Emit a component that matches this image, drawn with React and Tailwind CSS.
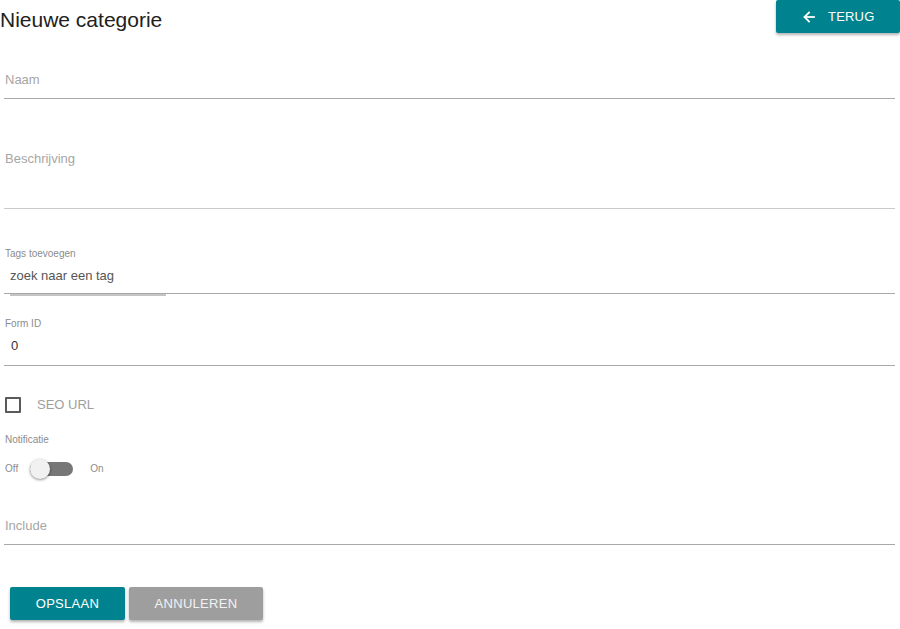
import React from "react";

function ArrowLeft() {
  return (
    <svg width="12" height="12" viewBox="0 0 12 12" fill="none" stroke="white" strokeWidth="1.8" strokeLinecap="square">
      <path d="M11 6H1.8" />
      <path d="M6 1.5L1.5 6L6 10.5" />
    </svg>
  );
}

export default function App() {
  return (
    <div className="w-[900px] h-[629px] bg-white overflow-hidden" style={{ fontFamily: '"Liberation Sans", Arial, sans-serif' }}>
      {/* header */}
      <div className="flex justify-between h-[33px]">
        <h1 className="pt-[8px] text-[21px] leading-[24px] text-[#212121] font-normal">Nieuwe categorie</h1>
        <button className="h-[33px] w-[124px] bg-[#00838f] text-white flex items-center pl-[27px] gap-[13px] text-[13px] leading-[15px] tracking-[0.2px] rounded-[2px] shadow-[0_2px_3px_rgba(0,0,0,0.3)]">
          <ArrowLeft />
          <span>TERUG</span>
        </button>
      </div>

      <div className="pl-[4px] pr-[5px]">
        {/* Naam */}
        <div className="h-[66px] border-b border-[#a8a8a8] pt-[39px] pl-[1px]">
          <div className="text-[13px] leading-[15px] text-[#a6a6a6]">Naam</div>
        </div>

        {/* Beschrijving */}
        <div className="h-[110px] border-b border-[#cacaca] pt-[52px] pl-[1px]">
          <div className="text-[13px] leading-[15px] text-[#a6a6a6]">Beschrijving</div>
        </div>

        {/* Tags */}
        <div className="h-[85px] border-b border-[#a8a8a8] pt-[39px] pl-[1px]">
          <div className="text-[10px] leading-[12px] text-[#8c8c8c]">Tags toevoegen</div>
          <div className="mt-[8px] pl-[5px] text-[13px] leading-[15px] text-[#555555]">zoek naar een tag</div>
        </div>
        <div className="ml-[6px] w-[156px] h-[2px] bg-[#c4c4c4]"></div>

        {/* Form ID */}
        <div className="h-[70px] border-b border-[#a8a8a8] pt-[22px] pl-[1px]">
          <div className="text-[10px] leading-[12px] text-[#8c8c8c]">Form ID</div>
          <div className="mt-[8px] pl-[6px] text-[13px] leading-[15px] text-[#333333]">0</div>
        </div>

        {/* SEO URL */}
        <div className="mt-[30px] h-[17px] flex items-center pl-[1px]">
          <div className="w-[16px] h-[16px] border-2 border-[#5a5a5a] rounded-[1px]"></div>
          <span className="ml-[16px] text-[13px] leading-[15px] text-[#9e9e9e]">SEO URL</span>
        </div>

        {/* Notificatie */}
        <div className="mt-[21px] pl-[1px] text-[10px] leading-[12px] text-[#8c8c8c]">Notificatie</div>
        <div className="mt-[13px] h-[20px] flex items-center pl-[1px]">
          <span className="text-[10px] leading-[12px] text-[#8c8c8c]">Off</span>
          <div className="relative ml-[12px] w-[43px] h-[14px]">
            <div className="absolute inset-0 rounded-full bg-[#777777]"></div>
            <div className="absolute left-0 top-[-3px] w-[20px] h-[20px] rounded-full bg-[#f1f1f1] shadow-[0_1px_3px_rgba(0,0,0,0.45)]"></div>
          </div>
          <span className="ml-[17px] text-[10px] leading-[12px] text-[#8c8c8c]">On</span>
        </div>

        {/* Include */}
        <div className="h-[66px] border-b border-[#a8a8a8] pt-[39px] pl-[1px]">
          <div className="text-[13px] leading-[15px] text-[#a6a6a6]">Include</div>
        </div>
      </div>

      {/* Buttons */}
      <div className="mt-[42px] pl-[10px] flex gap-[4px]">
        <button className="w-[115px] h-[33px] bg-[#00838f] text-white text-[13px] leading-[15px] tracking-[0.3px] rounded-[2px] shadow-[0_2px_3px_rgba(0,0,0,0.3)]">OPSLAAN</button>
        <button className="w-[134px] h-[33px] bg-[#9e9e9e] text-[#f2f2f2] text-[13px] leading-[15px] tracking-[0.3px] rounded-[2px] shadow-[0_2px_3px_rgba(0,0,0,0.3)]">ANNULEREN</button>
      </div>
    </div>
  );
}
